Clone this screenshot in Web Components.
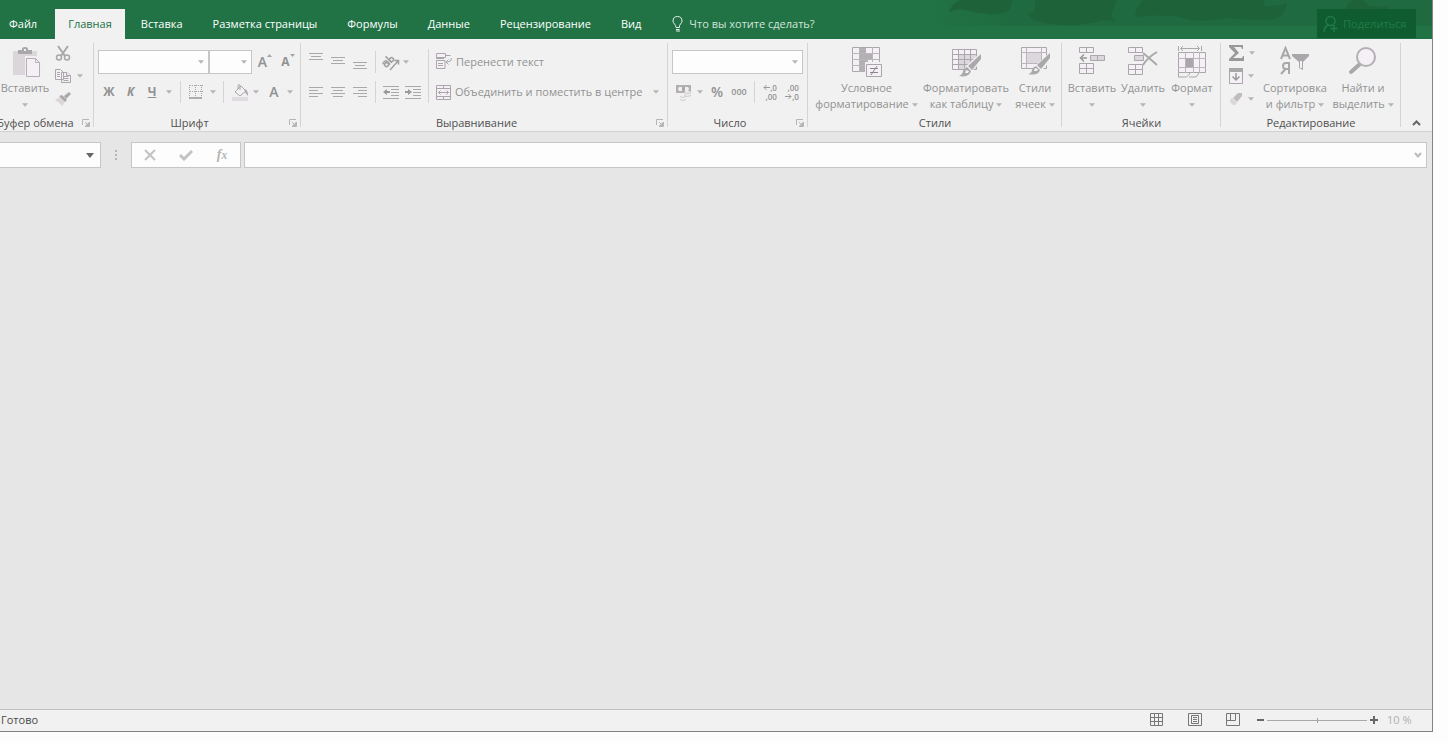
<!DOCTYPE html>
<html lang="ru">
<head>
<meta charset="utf-8">
<title>Книга</title>
<style>
  body { margin: 0; background: #fdfdfd; font: 11px/16px "Open Sans", "Noto Sans", sans-serif; }
</style>
</head>
<body>
<sheet-app></sheet-app>

<script>
const ICONS = {
  caret: [7, 4, '<path d="M0 0h7L3.500 4z" fill="currentColor"/>'],
  paste: [34, 32, '<g transform="translate(4)"><path d="M1 5h24v24H1z" fill="#dad6da"/><path d="M6 8V4h4V3q0-2 3-2t3 2v1h4v4z" fill="#a9a7a9"/><path d="M12 3h2v2h-2z" fill="#f0f0f0"/><path d="M13 10h11l6 6v16H13z" fill="#f0f0f0"/><path d="M14.500 12.500h9l4 4v14h-13z" fill="#f5f0f5" stroke="#b3b0b3"/><path d="M23.500 12.500v4h4" fill="none" stroke="#b3b0b3"/></g>'],
  cut: [16, 16, '<g fill="none" stroke="#a9a7a9"><path d="M3 1l7 10M13 1L6 11" stroke-width="2"/><circle cx="4" cy="12.500" r="2.500" stroke-width="1.500"/><circle cx="12" cy="12.500" r="2.500" stroke-width="1.500"/></g>'],
  copy: [16, 16, '<g fill="#f5f0f5" stroke="#a9a7a9"><path d="M.5 1.500h5l3 3v7h-8zM6.500 4.500h5l4 3v7h-9z"/><path d="M2 4.500h3M2 6.500h3M2 8.500h3M8.500 8.500h5M8.500 10.500h5M8.500 12.500h5M11.500 4.500v3h4"/></g>'],
  brush: [16, 16, '<path d="M0 9l5-3 5 5-3 4q-2-3-7-6z" fill="#dad6da"/><path d="M4 5l3-1 5 5-2 2z" fill="#a9a7a9"/><path d="M9 5l5-4 2 2-5 5z" fill="#a9a7a9"/>'],
  launch: [8, 8, '<path d="M.5 6V.5H7M3 3l3 3M7.500 3v4.500H3" fill="none" stroke="#b5b5b5"/><path d="M7 3v4H3z" fill="#b5b5b5"/>'],
  up: [5, 3, '<path d="M0 3h5L2.500 0z" fill="#a5a5a5"/>'],
  down: [5, 3, '<path d="M0 0h5L2.500 3z" fill="#a5a5a5"/>'],
  border: [14, 14, '<path d="M1 .5h13M1 6.500h13M.5 0v13M6.500 0v13M12.500 0v13" stroke="#aaa7aa" stroke-dasharray="1 1" fill="none"/><path d="M0 13h13" stroke="#999" stroke-width="1.500"/>'],
  bucket: [17, 17, '<path d="M0 13h16v4H0z" fill="#e0dbe0"/><path d="M3 8l6-6 5 5-6 5z" fill="#f5f0f5" stroke="#a9a7a9"/><path d="M6 5V2q0-2 2-1v5" fill="none" stroke="#a9a7a9"/><path d="M12 5q4 0 4 7-2-2-3-4z" fill="#a9a7a9"/>'],
  atop: [14, 18, '<path d="M0 .5h14M2 3.500h10M0 6.500h14" stroke="#a9a9a9"/>'],
  amid: [14, 18, '<path d="M0 4.500h14M2 7.500h10M0 10.500h14" stroke="#a9a9a9"/>'],
  abot: [14, 18, '<path d="M0 9.500h14M2 12.500h10M0 15.500h14" stroke="#a9a9a9"/>'],
  left: [14, 16, '<path d="M0 3.500h14M0 6.500h9M0 9.500h14M0 12.500h9" stroke="#a9a9a9"/>'],
  center: [14, 16, '<path d="M0 3.500h14M2 6.500h10M0 9.500h14M2 12.500h10" stroke="#a9a9a9"/>'],
  right: [14, 16, '<path d="M0 3.500h14M5 6.500h9M0 9.500h14M5 12.500h9" stroke="#a9a9a9"/>'],
  orient: [18, 18, '<g fill="none" stroke="#9f9f9f" stroke-width="1.500"><g transform="rotate(-45 6 8)"><circle cx="2.500" cy="9.500" r="2"/><path d="M0 6.500q5-2 5 1v4.500M7.500 3v9"/><circle cx="9.500" cy="9.500" r="2"/></g><path d="M8 17l8-9M12.500 7.500h4v4"/></g>'],
  outdent: [16, 16, '<path d="M0 2.500h16M8 5.500h8M8 8.500h8M8 11.500h8M0 14.500h16" stroke="#a9a9a9"/><path d="M0 8l4-3v2h3v2H4v2z" fill="#999"/>'],
  indent: [16, 16, '<path d="M0 2.500h16M8 5.500h8M8 8.500h8M8 11.500h8M0 14.500h16" stroke="#a9a9a9"/><path d="M7 8L3 5v2H0v2h3v2z" fill="#999"/>'],
  wrap: [16, 18, '<g fill="#f5f0f5" stroke="#aaa5aa"><path d="M.5.5h9v4h-9z"/><path d="M9 2.500h5.500M.5 7.500h8.500v8H.5z"/><path d="M2 10.500h5M2 12.500h5M0 5.500h8" fill="none"/><path d="M15.500 5q0 4-4 4H10M12.500 6.500L10 9l2.500 2.500" fill="none"/></g>'],
  merge: [15, 15, '<g fill="#f5f0f5" stroke="#a9a5a9"><path d="M.5.5h14v14H.5z"/><path d="M0 3.500h15M0 11.500h15M7.500 0v3.500M7.500 11.500V15M2 7.500h11M4.500 5.500l-2 2 2 2M10.500 5.500l2 2-2 2" fill="none"/></g>'],
  money: [17, 17, '<path d="M1 1h15v8H1z" fill="#b3b0b3"/><path d="M4 3h9l1 2-1 2H4L3 5z" fill="#f0f0f0"/><path d="M7 3h3v4H7z" fill="#aaa"/><path d="M9 8q3.500-3 7 0v3q-3.500 2-7 0z" fill="#ece8ec"/><path d="M9 8.500q3.500 2 7 0M9 11.500q3.500 2 7 0M5 12.500q3 2 6 0M5 15.500q3 2 6 0" stroke="#cfcacf" fill="none"/>'],
  arrowL: [7, 5, '<path d="M7 2.500H1M3.500 0L1 2.500 3.500 5" fill="none" stroke="#999"/>'],
  arrowR: [7, 5, '<path d="M0 2.500h6M3.500 0L6 2.500 3.500 5" fill="none" stroke="#999"/>'],
  cond: [30, 32, '<path d="M.5 1.500h27v24H.5z" fill="#f5f0f5" stroke="#aaa7aa"/><path d="M8 2h6v24H8zM14 8h6v5h-6zM14 14h2v5h-2z" fill="#b3b0b3"/><path d="M0 7.500h28M0 13.500h28M0 19.500h28M7.500 1v25M20.500 1v25" stroke="#bab7ba"/><path d="M13 16h17v15H13z" fill="#f0f0f0"/><path d="M14.500 18.500h15v12h-15z" fill="#f5f0f5" stroke="#a9a7a9"/><path d="M18 22.500h8M18 26.500h8M25 20l-6 9" stroke="#888"/>'],
  table: [31, 32, '<path d="M1.500 3.500h24v20h-24z" fill="#f5f0f5"/><path d="M8 8h17v16H8z" fill="#dcd7dc"/><path d="M1.500 3.500h24v20h-24zM1 8.500h25M1 13.500h25M1 18.500h25M7.500 3v21M13.500 3v21M19.500 3v21" fill="none" stroke="#aaa7aa"/><path d="M14 21l14-13 3 2-3 8-9 9H12z" fill="#f0f0f0"/><path d="M17 20L30 8v5L21 24z" fill="#a9a9a9"/><path d="M16 21l4 4q-2 7-12 5 4-2 4-5 1-3 4-4z" fill="#a9a9a9"/><path d="M15 24l3 1-1 2h-3z" fill="#f5f0f5"/>'],
  cells: [31, 32, '<path d="M1.500 1.500h25v21h-25z" fill="#f5f0f5" stroke="#aaa7aa"/><path d="M7 7h14v10H7z" fill="#dcd7dc"/><path d="M1 6.500h26M1 17.500h26M6.500 1v22M21.500 1v22" stroke="#bab7ba"/><path d="M14 21l14-13 3 2-3 8-9 9H12z" fill="#f0f0f0"/><path d="M17 19L30 7v5L21 23z" fill="#a9a9a9"/><path d="M16 20l4 4q-2 6-12 4 4-1 4-4 1-3 4-4z" fill="#a9a9a9"/><path d="M15 22l3 1-1 2h-3z" fill="#f5f0f5"/>'],
  insert: [27, 32, '<g fill="#f5f0f5" stroke="#aaa7aa"><path d="M.5 1.500h14v5H.5zM.5 17.500h14v10H.5zM7.500 1v6M7.500 17v11M0 22.500h15"/><path d="M11.500 9.500h14v5h-14zM18.500 9v6" fill="#dcd7dc"/></g><path d="M8 12H2M5 8.500L1.500 12 5 15.500" fill="none" stroke="#999" stroke-width="1.500"/>'],
  remove: [30, 32, '<g fill="#f5f0f5" stroke="#aaa7aa"><path d="M.5 1.500h14v5H.5zM.5 18.500h14v10H.5zM7.500 1v6M7.500 18v11M0 23.500h15"/><path d="M6.500 9.500h9v5h-9z" fill="#dcd7dc"/></g><path d="M15 7q5 4 14 12M29 6Q20 11 15 19" fill="none" stroke="#a9a9a9" stroke-width="2"/>'],
  format: [29, 32, '<path d="M.5 6.500h27v20H.5z" fill="#f5f0f5" stroke="#aaa7aa"/><path d="M0 12.500h28M0 21.500h28M7.500 6v21M15.500 6v21M21.500 6v21" stroke="#bab7ba"/><path d="M8 12h7v9H8z" fill="#a9a7a9"/><path d="M.5 0v5M23.500 0v5M3 2.500h18M5 0L2.500 2.500 5 5M19 0l2.500 2.500L19 5M.5 27v4h8l3-3v-1M11 31h7l3-4" fill="none" stroke="#a9a7a9"/>'],
  sum: [17, 16, '<path d="M1 0h14v4h-1l-1-2H6l5 6-6 5h9l1-2h1v5H1v-2l6-6L1 2z" fill="#999"/>'],
  fill: [15, 16, '<path d="M.5.5h13v15H.5z" fill="#f5f0f5" stroke="#a9a7a9"/><path d="M0 0h14v4H0z" fill="#a9a7a9"/><path d="M7 5v7M3.500 8.500L7 12l3.500-3.500" fill="none" stroke="#999" stroke-width="1.500"/>'],
  erase: [14, 14, '<path d="M4 6l5-5h4v3L8 10z" fill="#c0bdc0"/><path d="M1 8l2-2 5 5-2 2H4L1 10z" fill="#dad6da"/>'],
  sort: [30, 32, '<g fill="none" stroke="#aaa7aa" stroke-width="2"><path d="M1 13L5.500 2l4.500 11M2.500 9.500h6M9 16v12M10 17H6q-3 0-3 3t3 3h3M5.500 23L1 28"/></g><path d="M12 8h17v2l-6 6v8l-4-2v-6l-7-6z" fill="#aaa7aa"/><path d="M20 15h2v7h-2z" fill="#f5f0f5"/>'],
  find: [30, 32, '<path d="M3 26l9-8" stroke="#a9a7a9" stroke-width="4" stroke-linecap="round"/><circle cx="18" cy="11" r="9" fill="#f5f0f5" stroke="#b3b0b3" stroke-width="2"/>'],
  collapse: [9, 6, '<path d="M1 5l3.500-3.500L8 5" fill="none" stroke="#666" stroke-width="2"/>'],
  expand: [8, 6, '<path d="M1 1l3 3.500L7 1" fill="none" stroke="#bbb" stroke-width="2"/>'],
  cancel: [12, 12, '<path d="M1 1l10 10M11 1L1 11" stroke="#c2c2c2" stroke-width="2"/>'],
  accept: [14, 12, '<path d="M1 6l4 4 8-8" fill="none" stroke="#c2c2c2" stroke-width="3"/>'],
  dots: [2, 10, '<path d="M0 0h2v2H0zM0 4h2v2H0zM0 8h2v2H0z" fill="#b5b5b5"/>'],
  bulb: [12, 16, '<path d="M4 11.500q0-2-1.500-3.500T1 5q0-4.500 4.500-4.500T10 5q0 1.500-1.500 3T7.500 11.500zM4 13.500h3.500" fill="none" stroke="#e4efe8"/><path d="M4 15h4" stroke="#e4efe8"/>'],
  share: [16, 18, '<g fill="none" stroke="#217a49" stroke-width="1.500"><circle cx="7.500" cy="6" r="4.500"/><path d="M1 17q0-5 4.500-7M11 10v7M7.500 13.500h7"/></g>'],
  grid: [14, 14, '<path d="M.5.5h12v12H.5zM4.500 0v13M8.500 0v13M0 4.500h13M0 8.500h13" fill="none" stroke="#777"/>'],
  page: [14, 14, '<path d="M.5.5h13v12H.5zM3.500 2.500h7v8h-7zM5 4.500h4M5 6.500h4M5 8.500h4" fill="none" stroke="#777"/>'],
  breaks: [14, 14, '<path d="M.5.5h13v12H.5zM4.500 0v7M9.500 0v7.500H0" fill="none" stroke="#777"/>'],
  minus: [7, 7, '<path d="M0 2h7v2H0z" fill="#666"/>'],
  plus: [8, 8, '<path d="M3 0h2v3h3v2H5v3H3V5H0V3h3z" fill="#666"/>']
};
const icon = name => {
  const [w, h, body] = ICONS[name];
  return `<svg width="${w}" height="${h}" viewBox="0 0 ${w} ${h}" aria-hidden="true">${body}</svg>`;
};
const RESET = `
  *, ::before { box-sizing: border-box; }
  button, input, select { font: inherit; color: inherit; background: none; border: 0; margin: 0; padding: 0; border-radius: 0; outline: 0; opacity: 1; }
  svg { display: block; flex: none; }
`;
function define(tag, css, html) {
  customElements.define(tag, class extends HTMLElement {
    constructor() {
      super();
      this.attachShadow({ mode: 'open' });
    }
    connectedCallback() {
      const t = document.createElement('template');
      t.innerHTML = `<style>${RESET}${css}</style>${typeof html === 'function' ? html(this) : html}`;
      this.shadowRoot.replaceChildren(t.content.cloneNode(true));
    }
  });
}

/* Small toolbar button: an icon or a text glyph, with its width as --w */
define('tool-button', `
  :host { display: flex; width: var(--w, 22px); flex: none; height: 100%; }
  button { flex: 1; display: flex; align-items: center; justify-content: center; gap: 4px; min-width: 0; color: #929292; white-space: nowrap; }
  :host([wide]) button { justify-content: flex-start; }
`, el => `<button type="button" disabled aria-label="${el.getAttribute('label') || ''}">${el.hasAttribute('icon') ? icon(el.getAttribute('icon')) : ''}<slot></slot></button>`);

define('drop-arrow', `
  :host { display: flex; width: var(--w, 12px); flex: none; height: 100%; }
  button { flex: 1; display: flex; align-items: center; justify-content: center; color: #b5b5b5; }
  svg { width: 6px; height: 4px; }
`, `<button type="button" disabled aria-label="Ещё">${icon('caret')}</button>`);

define('tool-line', `
  :host { display: block; flex: none; width: 1px; height: 22px; background: #d4d4d4; margin: 0 var(--r, 7px) 0 var(--l, 5px); }
`, '');

/* Drop-down box without a value */
define('combo-box', `
  :host { display: grid; width: var(--w); height: 24px; align-items: center; }
  select, svg { grid-area: 1 / 1; }
  select { appearance: none; width: 100%; height: 100%; background: #fdfdfd; border: 1px solid #c6c6c6; }
  svg { justify-self: end; margin-right: 5px; color: #b5b5b5; width: 6px; }
`, el => `<select disabled aria-label="${el.getAttribute('label')}"><option></option></select>${icon('caret')}`);

/* Tall command: picture over one or two lines of caption */
define('big-command', `
  :host { display: block; flex: none; width: var(--w); }
  button { width: 100%; display: flex; flex-direction: column; align-items: center; gap: 2px; padding-top: 3px; color: #929292; line-height: 16px; }
  span { white-space: nowrap; text-align: center; }
  span svg { display: inline-block; vertical-align: middle; width: 6px; color: #b5b5b5; }
`, el => `<button type="button" disabled>${icon(el.getAttribute('icon'))}<span><slot></slot>${el.hasAttribute('two') ? ' ' : '<br>'}${icon('caret')}</span></button>`);

define('ribbon-group', `
  :host { display: grid; grid-template-rows: 72px 16px; flex: none; width: var(--w); padding-top: 4px;
    background: linear-gradient(#d4d4d4, #d4d4d4) no-repeat right 4px / 1px calc(100% - 8px); }
  .body { --w: initial; display: flex; min-width: 0; }
  footer { display: flex; align-items: center; color: #505050; }
  footer span { flex: 1; text-align: center; white-space: nowrap; }
  footer button { width: 16px; height: 16px; display: flex; align-items: center; padding-left: 4px; }
`, el => `<div class="body"><slot></slot></div><footer><span>${el.getAttribute('label')}</span>${el.hasAttribute('launcher') ? `<button type="button" aria-label="Параметры">${icon('launch')}</button>` : ''}</footer>`);

define('ribbon-bar', `
  :host { display: flex; height: 93px; background: #f1f1f1; border-bottom: 1px solid #d2d2d2; overflow: hidden; }
  .rows { display: grid; grid-template-rows: 24px 24px; row-gap: 6px; padding: 7px 0 0 4px; align-content: start; }
  .row { display: flex; align-items: center; }
  .stack { display: grid; grid-template-rows: repeat(3, 23px); margin-top: -2px; }
  .glyph { font-size: 14px; font-weight: 600; }
  .tall { --l: 4px; height: 54px; margin-top: 6px; }
  .dec { display: grid; font-size: 8px; line-height: 9px; justify-items: end; font-weight: 600; }
  .dec span { display: flex; align-items: center; height: 9px; }
  .clip { margin-left: -7px; }
  .clip big-command { margin-left: 7px; }
  .end { flex: 1; display: flex; align-items: flex-end; justify-content: center; padding-bottom: 3px; }
  .end button { display: grid; place-items: center; width: 20px; height: 10px; }
  .sup { align-self: flex-start; margin: 4px 0 0 -4px; }
  b { font-size: 12px; }
`, `
  <ribbon-group class="clip" label="Буфер обмена" launcher style="--w:101px">
    <big-command icon="paste" style="--w:50px">Вставить</big-command>
    <div class="stack">
      <div class="row"><tool-button icon="cut" label="Вырезать" style="--w:26px"></tool-button></div>
      <div class="row"><tool-button icon="copy" label="Копировать" style="--w:26px"></tool-button><drop-arrow style="--w:8px"></drop-arrow></div>
      <div class="row"><tool-button icon="brush" label="Формат по образцу" style="--w:26px"></tool-button></div>
    </div>
  </ribbon-group>
  <ribbon-group label="Шрифт" launcher style="--w:207px">
    <div class="rows">
      <div class="row"><combo-box label="Шрифт" style="--w:111px"></combo-box><combo-box label="Размер" style="--w:43px"></combo-box>
        <tool-button label="Увеличить размер" style="--w:26px"><span class="glyph">A</span><span class="sup">${icon('up')}</span></tool-button>
        <tool-button label="Уменьшить размер" style="--w:20px"><b>A</b><span class="sup">${icon('down')}</span></tool-button></div>
      <div class="row"><tool-button label="Полужирный"><b>Ж</b></tool-button><tool-button label="Курсив" style="--w:21px"><b><i>К</i></b></tool-button><tool-button label="Подчёркнутый"><b><u>Ч</u></b></tool-button><drop-arrow></drop-arrow><tool-line></tool-line>
        <tool-button icon="border" label="Границы" style="--w:16px"></tool-button><drop-arrow style="--w:18px"></drop-arrow><tool-line style="--l:1px"></tool-line>
        <tool-button icon="bucket" label="Цвет заливки" style="--w:18px"></tool-button><drop-arrow style="--w:14px"></drop-arrow><tool-button label="Цвет текста" style="--w:22px"><span class="glyph">A</span></tool-button><drop-arrow style="--w:10px"></drop-arrow></div>
    </div>
  </ribbon-group>
  <ribbon-group label="Выравнивание" launcher style="--w:367px">
    <div class="rows">
      <div class="row"><tool-button icon="atop" label="По верхнему краю"></tool-button><tool-button icon="amid" label="По середине"></tool-button><tool-button icon="abot" label="По нижнему краю"></tool-button><tool-line style="--l:4px;--r:4px"></tool-line><tool-button icon="orient" label="Ориентация"></tool-button><drop-arrow style="--w:8px"></drop-arrow></div>
      <div class="row"><tool-button icon="left" label="По левому краю"></tool-button><tool-button icon="center" label="По центру"></tool-button><tool-button icon="right" label="По правому краю"></tool-button><tool-line style="--l:4px;--r:4px"></tool-line><tool-button icon="outdent" label="Уменьшить отступ"></tool-button><tool-button icon="indent" label="Увеличить отступ"></tool-button></div>
    </div>
    <tool-line class="tall"></tool-line>
    <div class="rows" style="padding-left:0">
      <div class="row"><tool-button wide icon="wrap" label="Перенести текст" style="--w:120px">Перенести текст</tool-button></div>
      <div class="row"><tool-button wide icon="merge" label="Объединить и поместить в центре" style="--w:212px">Объединить и поместить в центре</tool-button><drop-arrow style="--w:16px"></drop-arrow></div>
    </div>
  </ribbon-group>
  <ribbon-group label="Число" launcher style="--w:140px">
    <div class="rows">
      <div class="row"><combo-box label="Числовой формат" style="--w:131px"></combo-box></div>
      <div class="row"><tool-button icon="money" label="Финансовый формат"></tool-button><drop-arrow style="--w:12px"></drop-arrow><tool-button label="Процентный формат"><span class="glyph">%</span></tool-button><tool-button label="Формат с разделителями"><span style="font-size:9px;font-weight:600">000</span></tool-button><tool-line style="--l:4px;--r:4px"></tool-line>
        <tool-button label="Увеличить разрядность"><span class="dec"><span>${icon('arrowL')},0</span><span>,00</span></span></tool-button><tool-button label="Уменьшить разрядность"><span class="dec"><span>,00</span><span>${icon('arrowR')},0</span></span></tool-button></div>
    </div>
  </ribbon-group>
  <ribbon-group label="Стили" style="--w:254px">
    <big-command two icon="cond" style="--w:109px;margin-left:4px">Условное<br>форматирование</big-command>
    <big-command two icon="table" style="--w:90px">Форматировать<br>как таблицу</big-command>
    <big-command two icon="cells" style="--w:48px">Стили<br>ячеек</big-command>
  </ribbon-group>
  <ribbon-group label="Ячейки" style="--w:159px">
    <big-command icon="insert" style="--w:50px;margin-left:5px">Вставить</big-command>
    <big-command icon="remove" style="--w:52px">Удалить</big-command>
    <big-command icon="format" style="--w:46px">Формат</big-command>
  </ribbon-group>
  <ribbon-group label="Редактирование" style="--w:180px">
    <div class="stack" style="margin-left:4px">
      <div class="row"><tool-button icon="sum" label="Сумма"></tool-button><drop-arrow style="--w:10px"></drop-arrow></div>
      <div class="row"><tool-button icon="fill" label="Заполнить"></tool-button><drop-arrow style="--w:8px"></drop-arrow></div>
      <div class="row"><tool-button icon="erase" label="Очистить"></tool-button><drop-arrow style="--w:8px"></drop-arrow></div>
    </div>
    <big-command two icon="sort" style="--w:76px">Сортировка<br>и фильтр</big-command>
    <big-command two icon="find" style="--w:60px">Найти и<br>выделить</big-command>
  </ribbon-group>
  <div class="end"><button type="button" aria-label="Свернуть ленту">${icon('collapse')}</button></div>
`);

define('tab-bar', `
  :host { position: relative; display: flex; align-items: flex-end; height: 39px; background: #217346; color: #fff; overflow: hidden; }
  .art { position: absolute; right: 0; top: 0; }
  nav { display: flex; position: relative; }
  nav button { height: 30px; padding: 0 14px; margin-right: 2px; white-space: nowrap; }
  nav button:first-child { padding: 0 16px 0 9px; }
  nav .on { background: #f1f1f1; color: #217346; padding: 0 13px; }
  label { position: relative; display: flex; align-items: center; gap: 5px; height: 30px; margin-left: 15px; flex: 1; }
  input { width: 160px; height: 16px; }
  input::placeholder { color: #d3e3da; opacity: 1; }
  .share { position: relative; display: flex; align-items: center; gap: 4px; width: 99px; height: 29px; margin: 0 16px 1px 0; padding-left: 6px; background: #0f5c30; color: #217a49; white-space: nowrap; }
`, `
  <svg class="art" width="510" height="39" viewBox="0 0 510 39" aria-hidden="true">
    <defs><linearGradient id="g"><stop offset="0" stop-color="#1f6a40" stop-opacity="0"/><stop offset=".2" stop-color="#1f6a40"/><stop offset="1" stop-color="#1f6a40"/></linearGradient></defs>
    <path d="M0 0h510v26H0z" fill="url(#g)"/>
    <g fill="#1e623a"><path d="M27 12q2-8 12-12h51q1 9-8 13-18 3-34-2-13-4-21 1z"/><path d="M106 13q8 1 7-7V0h81q-2 10-5 14l4 8q-10-4-18 0-25 5-43 2-25-2-26-11z"/><path d="M213 17q1-10 8-17h122q-3 5 0 6 12 0 22-3-3 17-19 17-25 0-40-2-20 4-38 2-20-7-55-3z"/><path d="M424 9q1-8 10-10 10 0 12 7 10 1 20 0v4z"/></g>
  </svg>
  <nav><button type="button">Файл</button><button type="button" class="on">Главная</button><button type="button">Вставка</button><button type="button">Разметка страницы</button><button type="button">Формулы</button><button type="button">Данные</button><button type="button">Рецензирование</button><button type="button">Вид</button></nav>
  <label>${icon('bulb')}<input type="text" placeholder="Что вы хотите сделать?" aria-label="Что вы хотите сделать?"></label>
  <button type="button" class="share">${icon('share')}Поделиться</button>
`);

define('formula-bar', `
  :host { display: flex; height: 26px; margin: 10px 5px 0 0; }
  .box { background: #fdfdfd; border: 1px solid #c6c6c6; display: flex; align-items: center; }
  .name { width: 101px; border-left: 0; padding-right: 6px; color: #666; }
  input { flex: 1; min-width: 0; height: 100%; padding: 0 4px; }
  .grip { width: 30px; display: grid; place-items: center; }
  .edit { width: 110px; margin-right: 3px; }
  .edit button { flex: 1; height: 100%; display: grid; place-items: center; color: #b5b5b5; font: italic bold 14px/16px "Liberation Serif", serif; }
  .line { flex: 1; padding-right: 4px; }
`, `
  <div class="box name"><input aria-label="Имя"><svg width="8" height="5" viewBox="0 0 8 5" aria-hidden="true"><path d="M0 0h8L4 5z" fill="#666"/></svg></div>
  <div class="grip">${icon('dots')}</div>
  <div class="box edit"><button type="button" disabled aria-label="Отмена">${icon('cancel')}</button><button type="button" disabled aria-label="Ввод">${icon('accept')}</button><button type="button" disabled><span>f<small>x</small></span></button></div>
  <div class="box line"><input aria-label="Строка формул">${icon('expand')}</div>
`);

define('status-bar', `
  :host { box-sizing: border-box; display: flex; align-items: center; height: 22px; background: #f1f1f1; border-top: 1px solid #c2c2c2; padding: 0 20px 1px 1px; color: #484848; }
  .state { flex: 1; }
  .views { display: flex; gap: 24px; margin-right: 17px; }
  .views button, .zoom button { display: grid; place-items: center; }
  .zoom { display: flex; align-items: center; gap: 3px; }
  .zoom input { appearance: none; width: 100px; height: 9px; background: linear-gradient(#a9a9a9, #a9a9a9) no-repeat center / 100% 1px; }
  .zoom input::-webkit-slider-thumb { appearance: none; width: 1px; height: 5px; background: #a0a0a0; }
  output { color: #b0b0b0; width: 25px; margin-left: 6px; white-space: nowrap; }
`, `
  <span class="state">Готово</span>
  <div class="views"><button type="button" aria-label="Обычный">${icon('grid')}</button><button type="button" aria-label="Разметка страницы">${icon('page')}</button><button type="button" aria-label="Страничный режим">${icon('breaks')}</button></div>
  <div class="zoom"><button type="button" aria-label="Уменьшить">${icon('minus')}</button><input type="range" min="0" max="100" value="50" disabled aria-label="Масштаб"><button type="button" aria-label="Увеличить">${icon('plus')}</button><output>10 %</output></div>
`);

define('sheet-app', `
  :host { display: flex; height: 100vh; box-sizing: border-box; padding: 0 15px 11px 0; }
  main { flex: 1; min-width: 0; display: flex; flex-direction: column; background: #e6e6e6; border: solid #848484; border-width: 0 1px 1px 0; overflow: hidden; }
  .canvas { flex: 1; }
`, `<main><tab-bar></tab-bar><ribbon-bar></ribbon-bar><formula-bar></formula-bar><div class="canvas"></div><status-bar></status-bar></main>`);
</script>
</body>
</html>
